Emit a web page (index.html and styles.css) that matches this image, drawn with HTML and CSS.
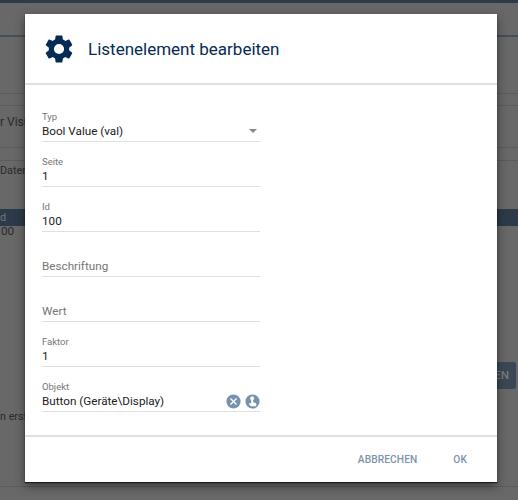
FILE: index.html
```html
<!DOCTYPE html>
<html lang="en">
<head>
  <meta charset="UTF-8" />
  <title>Listenelement bearbeiten</title>
  <link rel="stylesheet" href="styles.css">
</head>
<body>
  <div class="page">
    <div class="topbar"></div>
    <div class="page-line line-a"></div>
    <div class="page-line line-b"></div>
    <div class="page-line line-c"></div>
    <div class="page-line line-d"></div>
    <div class="page-line line-e"></div>
    <div class="page-line line-f"></div>
    <div class="page-text visu">r Visu</div>
    <div class="page-text daten">Daten</div>
    <div class="table-head">d</div>
    <div class="page-text cell">00</div>
    <div class="page-text erst">n erst</div>
    <div class="page-btn">EN</div>
  </div>

  <div class="dialog">
    <div class="dialog-head">
      <svg class="gear" viewBox="0 0 24 24"><path d="M19.14 12.94c.04-.3.06-.61.06-.94 0-.32-.02-.64-.07-.94l2.03-1.58a.49.49 0 0 0 .12-.61l-1.92-3.32a.49.49 0 0 0-.59-.22l-2.39.96c-.5-.38-1.03-.7-1.62-.94l-.36-2.54a.48.48 0 0 0-.48-.41h-3.84a.47.47 0 0 0-.47.41l-.36 2.54c-.59.24-1.13.57-1.62.94l-2.39-.96a.48.48 0 0 0-.59.22L2.74 8.87a.47.47 0 0 0 .12.61l2.03 1.58c-.05.3-.09.63-.09.94s.02.64.07.94l-2.03 1.58a.49.49 0 0 0-.12.61l1.92 3.32c.12.22.37.29.59.22l2.39-.96c.5.38 1.03.7 1.62.94l.36 2.54c.05.24.24.41.48.41h3.84c.24 0 .44-.17.47-.41l.36-2.54c.59-.24 1.13-.56 1.62-.94l2.39.96c.22.08.47 0 .59-.22l1.92-3.32a.47.47 0 0 0-.12-.61l-2.01-1.58zM12 15.6A3.6 3.6 0 1 1 12 8.4a3.6 3.6 0 0 1 0 7.2z"/></svg>
      <h2>Listenelement bearbeiten</h2>
    </div>

    <div class="dialog-body">
      <div class="field">
        <label>Typ</label>
        <div class="value">Bool Value (val)<span class="caret"></span></div>
      </div>
      <div class="field">
        <label>Seite</label>
        <div class="value">1</div>
      </div>
      <div class="field">
        <label>Id</label>
        <div class="value">100</div>
      </div>
      <div class="field">
        <label></label>
        <div class="value empty">Beschriftung</div>
      </div>
      <div class="field">
        <label></label>
        <div class="value empty">Wert</div>
      </div>
      <div class="field">
        <label>Faktor</label>
        <div class="value">1</div>
      </div>
      <div class="field">
        <label>Objekt</label>
        <div class="value">
          Button (Geräte\Display)
          <span class="icons">
            <svg viewBox="0 0 24 24"><path d="M12 2a10 10 0 1 0 0 20 10 10 0 0 0 0-20zm5 13.6L15.6 17 12 13.4 8.4 17 7 15.6 10.6 12 7 8.4 8.4 7 12 10.6 15.6 7 17 8.4 13.4 12z"/></svg>
            <svg viewBox="0 0 24 24"><path d="M12 2a10 10 0 1 0 0 20 10 10 0 0 0 0-20zm-.5 2.7a2.8 2.8 0 0 1 1.4 5.2v3l3.6 1.2c.5.2.8.6.8 1.1v3.6H9.5L6.8 15l1-1 2.3 1.2V9.9a2.8 2.8 0 0 1 1.4-5.2z"/></svg>
          </span>
        </div>
      </div>
    </div>

    <div class="dialog-foot">
      <button>Abbrechen</button>
      <button>OK</button>
    </div>
  </div>
</body>
</html>
```

FILE: styles.css
```css
html, body {
  margin: 0;
  height: 100%;
  overflow: hidden;
}

body {
  font-family: Roboto, "Liberation Sans", sans-serif;
  background: #686868;
}

/* page behind the dialog, already dimmed */
.page {
  position: absolute;
  inset: 0;
  overflow: hidden;
  color: #2a2a2a;
  font-size: 10.8px;
}

.topbar {
  height: 3px;
  background: #2c3a49;
}

.page-line {
  position: absolute;
  left: 0;
  right: 0;
  height: 1px;
  background: #5c5c5c;
}

.line-a {
  top: 35px;
  height: 2px;
  background: #464f58;
}

.line-b {
  top: 93px;
}

.line-c {
  top: 105px;
}

.line-d {
  top: 147px;
}

.line-e {
  top: 160px;
}

.line-f {
  top: 486px;
}

.page-text {
  position: absolute;
  left: 0;
}

.visu {
  top: 115px;
  font-size: 12px;
}

.daten {
  top: 164px;
}

.cell {
  top: 224px;
  left: 1px;
  font-size: 11.7px;
}

.erst {
  top: 410px;
}

.table-head {
  position: absolute;
  top: 209px;
  left: 0;
  right: 0;
  height: 17px;
  line-height: 17px;
  background: #2c3a49;
  color: #777;
}

.page-btn {
  position: absolute;
  top: 362px;
  left: 480px;
  width: 36px;
  height: 27px;
  line-height: 27px;
  box-sizing: border-box;
  padding-right: 7px;
  text-align: right;
  background: #3a4856;
  border-radius: 2px;
  color: #7c7c7c;
  font-size: 11.7px;
  font-weight: 500;
}

.dialog {
  position: absolute;
  top: 14px;
  left: 25px;
  width: 472px;
  height: 468px;
  display: flex;
  flex-direction: column;
  background: #fff;
  box-shadow: 0 1px 1px rgba(0, 0, 0, 0.6), 0 4px 10px rgba(0, 0, 0, 0.45);
}

.dialog-head {
  display: flex;
  align-items: center;
  gap: 12px;
  height: 69px;
  padding-left: 17px;
  border-bottom: 2px solid #e0e0e0;
}

.gear {
  width: 34px;
  height: 34px;
  fill: #052c52;
}

.dialog-head h2 {
  margin: 0;
  font-size: 17px;
  font-weight: 400;
  color: #052c52;
}

.dialog-body {
  flex: 1;
  padding: 22px 17px 0;
}

.field {
  width: 218px;
  height: 45px;
  box-sizing: border-box;
  padding-top: 4px;
}

.field label {
  display: block;
  height: 10px;
  line-height: 12px;
  font-size: 9.5px;
  color: #757575;
}

.value {
  display: flex;
  align-items: center;
  justify-content: space-between;
  height: 20px;
  border-bottom: 1px solid #e0e0e0;
  font-size: 11.7px;
  color: #212121;
}

.value.empty {
  color: #757575;
}

.caret {
  width: 0;
  height: 0;
  margin-right: 3px;
  border-left: 4px solid transparent;
  border-right: 4px solid transparent;
  border-top: 4px solid #888;
}

.icons {
  display: flex;
  gap: 2px;
  margin-right: -1px;
}

.icons svg {
  width: 17px;
  height: 17px;
  fill: #7592ae;
  fill-rule: evenodd;
}

.dialog-foot {
  display: flex;
  justify-content: flex-end;
  align-items: center;
  gap: 36px;
  height: 45px;
  padding-right: 30px;
  border-top: 2px solid #e0e0e0;
}

.dialog-foot button {
  padding: 0;
  border: none;
  background: none;
  font-family: inherit;
  font-size: 10.2px;
  font-weight: 500;
  text-transform: uppercase;
  letter-spacing: 0.1px;
  color: #7c93ab;
}
```
